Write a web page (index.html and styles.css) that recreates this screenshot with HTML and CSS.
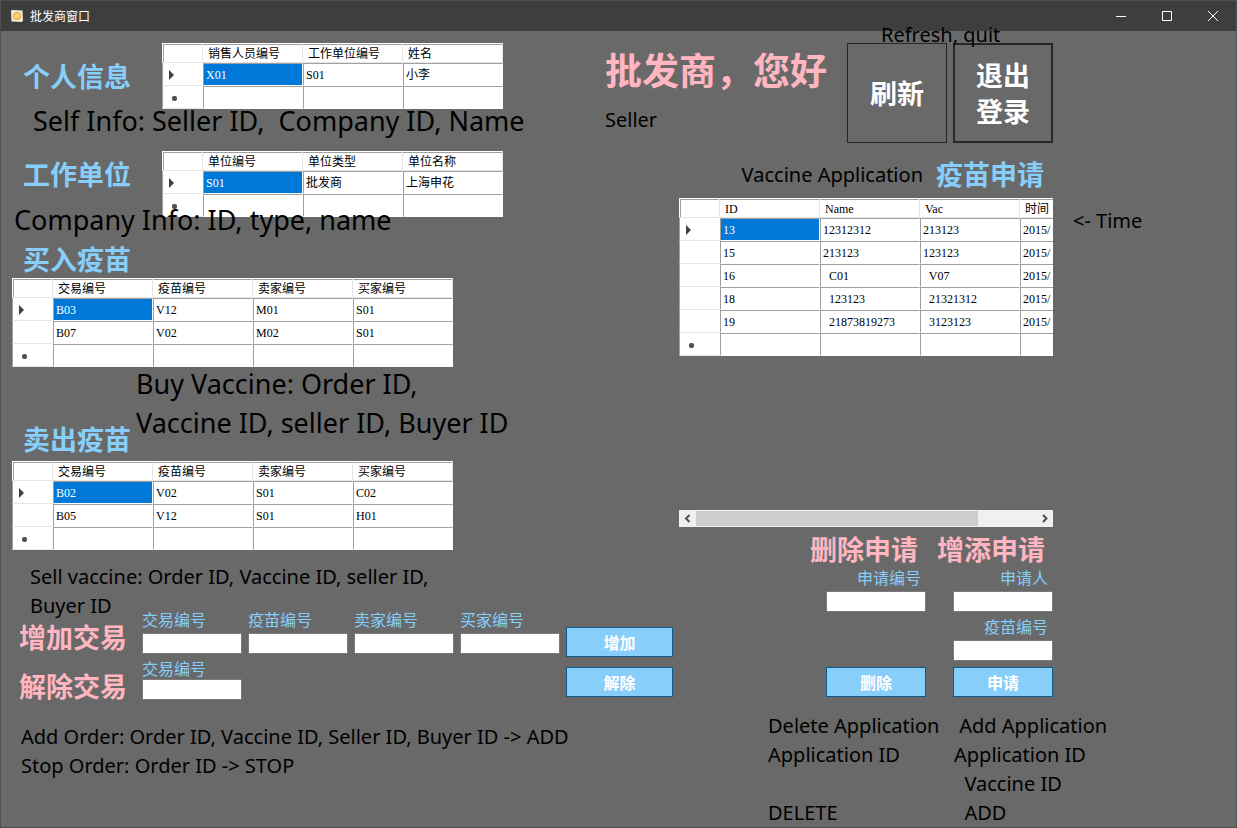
FILE: index.html
```html
<!DOCTYPE html>
<html lang="zh-CN">
<head>
<meta charset="utf-8">
<title>批发商窗口</title>
<link rel="stylesheet" href="styles.css">
</head>
<body>
<div class="window">
  <header class="titlebar">
    <svg class="app-icon" viewBox="0 0 14 14" aria-hidden="true">
      <path d="M2 1 L12.500 1.500 L13 12 L11.500 13 L1.500 12.500 L1 2 Z" fill="#eeeae2"/>
      <circle cx="7" cy="7" r="4.300" fill="#f3bd4a"/>
      <path d="M4.500 8.500 Q4.500 5 7.500 4.500 Q9.800 5 9.300 7.200 Q8 9.500 4.500 8.500" fill="#fbd987"/>
    </svg>
    <span class="window-title">批发商窗口</span>
    <div class="window-controls">
      <button type="button" aria-label="最小化"><svg viewBox="0 0 10 10"><path d="M0 5.500H10"/></svg></button>
      <button type="button" aria-label="最大化"><svg viewBox="0 0 10 10"><path d="M.5 .5H9.500V9.500H.5Z"/></svg></button>
      <button type="button" aria-label="关闭"><svg viewBox="0 0 10 10"><path d="M0 0L10 10M10 0L0 10"/></svg></button>
    </div>
  </header>

  <main>
    <div class="top-band">
      <section class="self">
        <div class="record">
          <h2 class="title blue">个人信息</h2>
          <table class="grid">
            <thead><tr><th class="corner"></th><th>销售人员编号</th><th>工作单位编号</th><th>姓名</th></tr></thead>
            <tbody>
              <tr><th class="current"></th><td class="selected">X01</td><td>S01</td><td>小李</td></tr>
              <tr><th class="new"></th><td></td><td></td><td></td></tr>
            </tbody>
          </table>
        </div>
        <p class="note large self-note">Self Info: Seller ID,&nbsp; Company ID, Name</p>
      </section>
      <section class="greeting">
        <h1>批发商，您好</h1>
        <p class="note">Seller</p>
      </section>
      <div class="session">
        <p class="note session-note">Refresh, quit</p>
        <button type="button" class="square">刷新</button>
        <button type="button" class="square focused">退出<br>登录</button>
      </div>
    </div>

    <div class="columns">
      <div class="left">
        <section class="record company">
          <h2 class="title blue">工作单位</h2>
          <table class="grid">
            <thead><tr><th class="corner"></th><th>单位编号</th><th>单位类型</th><th>单位名称</th></tr></thead>
            <tbody>
              <tr><th class="current"></th><td class="selected">S01</td><td>批发商</td><td>上海申花</td></tr>
              <tr><th class="new"></th><td></td><td></td><td></td></tr>
            </tbody>
          </table>
          <p class="note large company-note">Company Info: ID, type, name</p>
        </section>

        <section class="orders">
          <h2 class="title blue">买入疫苗</h2>
          <table class="grid">
            <thead><tr><th class="corner"></th><th>交易编号</th><th>疫苗编号</th><th>卖家编号</th><th>买家编号</th></tr></thead>
            <tbody>
              <tr><th class="current"></th><td class="selected">B03</td><td>V12</td><td>M01</td><td>S01</td></tr>
              <tr><th></th><td>B07</td><td>V02</td><td>M02</td><td>S01</td></tr>
              <tr><th class="new"></th><td></td><td></td><td></td><td></td></tr>
            </tbody>
          </table>
        </section>

        <section class="orders">
          <div class="sell-head">
            <h2 class="title blue">卖出疫苗</h2>
            <p class="note large">Buy Vaccine: Order ID,<br>Vaccine ID, seller ID, Buyer ID</p>
          </div>
          <table class="grid">
            <thead><tr><th class="corner"></th><th>交易编号</th><th>疫苗编号</th><th>卖家编号</th><th>买家编号</th></tr></thead>
            <tbody>
              <tr><th class="current"></th><td class="selected">B02</td><td>V02</td><td>S01</td><td>C02</td></tr>
              <tr><th></th><td>B05</td><td>V12</td><td>S01</td><td>H01</td></tr>
              <tr><th class="new"></th><td></td><td></td><td></td><td></td></tr>
            </tbody>
          </table>
          <p class="note sell-note">Sell vaccine: Order ID, Vaccine ID, seller ID,<br>Buyer ID</p>
        </section>

        <form class="trade">
          <div class="trade-titles">
            <h2 class="title pink">增加交易</h2>
            <h2 class="title pink">解除交易</h2>
          </div>
          <div class="trade-fields">
            <div class="field"><label for="add-order">交易编号</label><input id="add-order" type="text"></div>
            <div class="field"><label for="add-vaccine">疫苗编号</label><input id="add-vaccine" type="text"></div>
            <div class="field"><label for="add-seller">卖家编号</label><input id="add-seller" type="text"></div>
            <div class="field"><label for="add-buyer">买家编号</label><input id="add-buyer" type="text"></div>
            <div class="field tight"><label for="stop-order">交易编号</label><input id="stop-order" type="text"></div>
          </div>
          <div class="trade-actions">
            <button type="button" class="action">增加</button>
            <button type="button" class="action">解除</button>
          </div>
        </form>
        <p class="note trade-note">Add Order: Order ID, Vaccine ID, Seller ID, Buyer ID -&gt; ADD<br>Stop Order: Order ID -&gt; STOP</p>
      </div>

      <div class="right">
        <section class="applications">
          <div class="applications-head">
            <p class="note">Vaccine Application</p>
            <h2 class="title blue">疫苗申请</h2>
          </div>
          <div class="applications-body">
            <div class="viewer">
              <div class="viewport">
                <table class="grid">
                  <thead><tr><th class="corner"></th><th>ID</th><th>Name</th><th>Vac</th><th>时间</th></tr></thead>
                  <tbody>
                    <tr><th class="current"></th><td class="selected">13</td><td>12312312</td><td>213123</td><td>2015/</td></tr>
                    <tr><th></th><td>15</td><td>213123</td><td>123123</td><td>2015/</td></tr>
                    <tr><th></th><td>16</td><td>  C01</td><td>  V07</td><td>2015/</td></tr>
                    <tr><th></th><td>18</td><td>  123123</td><td>  21321312</td><td>2015/</td></tr>
                    <tr><th></th><td>19</td><td>  21873819273</td><td>  3123123</td><td>2015/</td></tr>
                    <tr><th class="new"></th><td></td><td></td><td></td><td></td></tr>
                  </tbody>
                </table>
              </div>
              <div class="scrollbar">
                <button type="button" aria-label="向左滚动"><svg viewBox="0 0 17 17"><path d="M10.500 5L7 8.500L10.500 12"/></svg></button>
                <div class="track"><div class="thumb"></div></div>
                <button type="button" aria-label="向右滚动"><svg viewBox="0 0 17 17"><path d="M7 5L10.500 8.500L7 12"/></svg></button>
              </div>
            </div>
            <p class="note time-note">&lt;- Time</p>
          </div>
        </section>

        <div class="requests">
          <form class="request">
            <h2 class="title pink">删除申请</h2>
            <div class="field"><label for="del-id">申请编号</label><input id="del-id" type="text"></div>
            <button type="button" class="action">删除</button>
          </form>
          <form class="request">
            <h2 class="title pink">增添申请</h2>
            <div class="field"><label for="req-person">申请人</label><input id="req-person" type="text"></div>
            <div class="field"><label for="req-vaccine">疫苗编号</label><input id="req-vaccine" type="text"></div>
            <button type="button" class="action">申请</button>
          </form>
        </div>
        <div class="request-notes">
          <p class="note">Delete Application
Application ID

DELETE</p>
          <p class="note"> Add Application
Application ID
  Vaccine ID
  ADD</p>
        </div>
      </div>
    </div>
  </main>
</div>
</body>
</html>
```
FILE: styles.css
```css
* { box-sizing: border-box; }

body {
  margin: 0;
  background: #696969;
  font-family: "Noto Sans", "Noto Sans CJK SC", sans-serif;
  color: #000;
}

h1, h2, p { margin: 0; }

button { font-family: inherit; padding: 0; cursor: pointer; }

.window {
  min-height: 100vh;
  border: 1px solid #505050;
  background: #696969;
}

/* Title bar */
.titlebar {
  display: flex;
  align-items: center;
  height: 30px;
  padding-left: 9px;
  background: #3e3e3e;
}
.app-icon { width: 14px; height: 14px; }
.window-title {
  margin-left: 6px;
  color: #fff;
  font: 12px/16px "Noto Sans CJK SC", sans-serif;
}
.window-controls { display: flex; margin-left: auto; }
.window-controls button {
  display: grid;
  place-items: center;
  width: 46px;
  height: 30px;
  border: 0;
  background: none;
}
.window-controls svg {
  width: 10px;
  height: 10px;
  overflow: visible;
  fill: none;
  stroke: #fff;
}

/* Text */
.title { font: bold 27px/36px "Noto Sans CJK SC", sans-serif; white-space: nowrap; }
.blue { color: #87cefa; }
.pink { color: #ffb6c1; }
.note { font-size: 20px; line-height: 29px; white-space: nowrap; }
.note.large { font-size: 27px; line-height: 39px; }

/* Data grids */
.grid {
  table-layout: fixed;
  width: min-content;
  border-collapse: separate;
  border-spacing: 0;
  background: #fff;
  font: 12px/16px "Liberation Serif", "Noto Sans CJK SC", serif;
}
.grid th, .grid td {
  width: 100px;
  min-width: 100px;
  padding: 0 2px;
  text-align: left;
  font-weight: normal;
  white-space: pre;
  background-clip: padding-box;
}
.grid thead th {
  height: 20px;
  padding: 2px 5px 0;
  border-right: 1px solid #e5e5e5;
  border-bottom: 1px solid #e5e5e5;
  box-shadow: inset 0 1px #fff, inset 0 2px #a0a0a0;
}
.grid thead th.corner { box-shadow: inset 1px 1px #fff, inset 2px 2px #a0a0a0; }
.grid tbody th, .grid th.corner { width: 41px; min-width: 41px; }
.grid tbody th {
  border-left: 1px solid #a0a0a0;
  border-bottom: 1px solid #e5e5e5;
}
.grid tbody td, .grid tbody th { height: 23px; }
.grid tbody td {
  border: 1px solid #fff;
  border-top-color: #a0a0a0;
  border-left-color: #a0a0a0;
}
.grid td.selected { background-color: #0078d7; color: #fff; }
.grid th.current::before {
  content: "";
  display: block;
  margin: 2px 0 0 4px;
  width: 0;
  border: 5px solid transparent;
  border-left-color: #404040;
  border-right-width: 0;
}
.grid th.new::before {
  content: "";
  display: block;
  width: 5px;
  height: 5px;
  margin: 3px 0 0 7px;
  border-radius: 2px;
  background: #505050;
}

/* Upper band */
.top-band { display: flex; padding-top: 12px; height: 120px; }
.self { width: 604px; }
.record { position: relative; display: flex; padding-left: 22px; }
.record .title { width: 139px; padding-top: 15px; }
.company .title { padding-top: 5px; }
.self-note { padding-left: 32px; margin-top: -8px; }
.company-note { position: absolute; left: 13px; top: 49px; }
.greeting { width: 242px; }
.greeting h1 {
  color: #ffb6c1;
  font: bold 37px/52px "Noto Sans CJK SC", sans-serif;
  white-space: nowrap;
}
.greeting .note { margin-top: 10px; }
.session { position: relative; display: flex; gap: 6px; }
.session-note { position: absolute; left: 34px; top: -23px; }
.square {
  width: 100px;
  height: 100px;
  border: 1px solid #262826;
  background: none;
  color: #fff;
  font: bold 27px/36px "Noto Sans CJK SC", sans-serif;
}
.square.focused { border-width: 2px; }

/* Main columns */
.columns { display: flex; }
.left { width: 678px; flex: none; }
.right { flex: 1; }

.company { margin-bottom: 24px; }
.orders { padding-left: 11px; }
.orders > .title { padding: 0 0 1px 11px; }
.sell-head { display: flex; height: 94px; padding: 0 0 4px 11px; }
.sell-head .title { align-self: flex-end; width: 113px; }
.sell-head .note { margin-top: -3px; }
.sell-note { padding: 12px 0 0 18px; }

.field { display: flex; flex-direction: column; gap: 4px; width: 100px; }
.field.tight { gap: 1px; }
.field label {
  color: #87cefa;
  font: 16px/20px "Noto Sans CJK SC", sans-serif;
}
.field input {
  width: 100%;
  height: 21px;
  padding: 1px 3px;
  border: 1px solid #7a7a7a;
  background: #fff;
}
.action {
  flex: none;
  height: 30px;
  border: 1px solid #105a8c;
  background: #87cefa;
  color: #fff;
  font: bold 16px/20px "Noto Sans CJK SC", sans-serif;
}

.trade { display: flex; margin-top: -11px; padding-left: 18px; }
.trade-titles { display: flex; flex-direction: column; gap: 13px; width: 123px; padding-top: 10px; }
.trade-fields { display: grid; grid-template-columns: repeat(4, 100px); gap: 4px 6px; align-content: start; }
.trade-actions { display: flex; flex-direction: column; gap: 10px; width: 107px; margin-left: 6px; padding-top: 18px; }
.trade-note { padding: 18px 0 0 20px; }

/* Applications */
.applications-head {
  display: flex;
  justify-content: flex-end;
  align-items: center;
  gap: 13px;
  width: 374px;
  padding: 5px 9px 6px 0;
}
.applications-body { display: flex; gap: 20px; }
.viewer { width: 374px; }
.viewport { height: 312px; overflow: hidden; }
.time-note { padding-top: 8px; }
.scrollbar { display: flex; height: 17px; background: #f0f0f0; }
.scrollbar button { width: 17px; height: 17px; border: 0; background: none; }
.scrollbar svg { display: block; width: 17px; height: 17px; fill: none; stroke: #505050; stroke-width: 2; }
.track { flex: 1; padding: 1px 0; }
.thumb { width: 83%; height: 15px; background: #cdcdcd; }

.requests { display: flex; gap: 27px; padding: 4px 0 0 147px; }
.request { display: flex; flex-direction: column; width: 100px; height: 166px; }
.request .title { align-self: flex-end; padding-right: 8px; }
.request .field { margin-bottom: 4px; }
.request label { text-align: right; padding-right: 5px; }
.request .action { margin-top: auto; }
.request-notes { display: flex; padding: 14px 0 0 89px; }
.request-notes .note { width: 186px; white-space: pre; }
```
